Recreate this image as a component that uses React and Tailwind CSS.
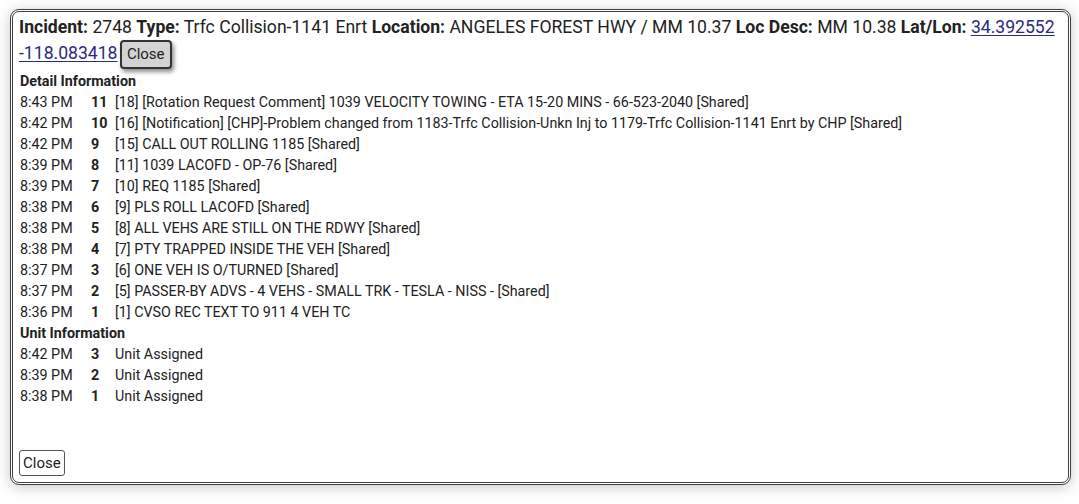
import React from "react";

const details = [
  ["8:43 PM", "11", "[18] [Rotation Request Comment] 1039 VELOCITY TOWING - ETA 15-20 MINS - 66-523-2040 [Shared]"],
  ["8:42 PM", "10", "[16] [Notification] [CHP]-Problem changed from 1183-Trfc Collision-Unkn Inj to 1179-Trfc Collision-1141 Enrt by CHP [Shared]"],
  ["8:42 PM", "9", "[15] CALL OUT ROLLING 1185 [Shared]"],
  ["8:39 PM", "8", "[11] 1039 LACOFD - OP-76 [Shared]"],
  ["8:39 PM", "7", "[10] REQ 1185 [Shared]"],
  ["8:38 PM", "6", "[9] PLS ROLL LACOFD [Shared]"],
  ["8:38 PM", "5", "[8] ALL VEHS ARE STILL ON THE RDWY [Shared]"],
  ["8:38 PM", "4", "[7] PTY TRAPPED INSIDE THE VEH [Shared]"],
  ["8:37 PM", "3", "[6] ONE VEH IS O/TURNED [Shared]"],
  ["8:37 PM", "2", "[5] PASSER-BY ADVS - 4 VEHS - SMALL TRK - TESLA - NISS - [Shared]"],
  ["8:36 PM", "1", "[1] CVSO REC TEXT TO 911 4 VEH TC"],
];

const units = [
  ["8:42 PM", "3", "Unit Assigned"],
  ["8:39 PM", "2", "Unit Assigned"],
  ["8:38 PM", "1", "Unit Assigned"],
];

function Row({ time, num, text }) {
  return (
    <div className="flex h-[21px] items-center whitespace-nowrap">
      <span className="w-[71px] shrink-0">{time}</span>
      <span className="w-[24px] shrink-0 font-bold">{num}</span>
      <span>{text}</span>
    </div>
  );
}

export default function App() {
  return (
    <div
      className="min-h-[504px] w-[1079px] bg-white pl-[10px] pt-[9px] text-[#222]"
      style={{ fontFamily: "Roboto, 'Liberation Sans', sans-serif" }}
    >
      <div className="flex h-[476px] w-[1061px] flex-col rounded-[9px] border-[3px] border-double border-[#3f3f3f] bg-white px-[6px] pt-[2px] pb-[6px] shadow-[0_2px_14px_rgba(0,0,0,0.22)]">
        <div className="text-[17.6px] leading-[26px]">
          <b className="font-bold">Incident:</b> 2748 <b className="font-bold">Type:</b> Trfc Collision-1141 Enrt{" "}
          <b className="font-bold">Location:</b> ANGELES FOREST HWY / MM 10.37{" "}
          <b className="font-bold">Loc Desc:</b> MM 10.38 <b className="font-bold">Lat/Lon:</b>{" "}
          <a href="#" className="text-[#2b2b80] underline underline-offset-2">
            34.392552 -118.083418
          </a>{" "}
          <button className="-ml-[2px] h-[29px] rounded-[4px] border-2 border-[#333] bg-[#d3d3d3] px-[5px] align-middle text-[15px] leading-none text-[#222] shadow-[2px_3px_4px_rgba(0,0,0,0.45)]">
            Close
          </button>
        </div>
        <div className="mt-[2px] px-[1px] text-[14.3px]">
          <div className="flex h-[21px] items-center font-bold">Detail Information</div>
          {details.map(([t, n, x]) => (
            <Row key={n + t} time={t} num={n} text={x} />
          ))}
          <div className="flex h-[21px] items-center font-bold">Unit Information</div>
          {units.map(([t, n, x]) => (
            <Row key={"u" + n} time={t} num={n} text={x} />
          ))}
        </div>
        <div className="mt-auto">
          <button className="h-[26px] rounded-[3px] border border-[#555] bg-white px-[3px] text-[15px] leading-none text-[#222]">
            Close
          </button>
        </div>
      </div>
    </div>
  );
}
